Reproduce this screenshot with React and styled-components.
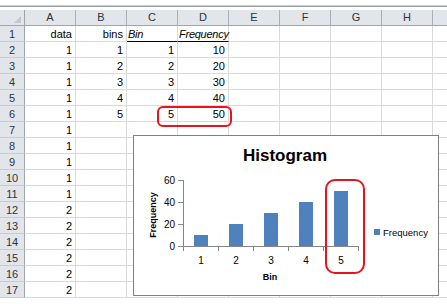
import React from 'react'
import styled, { createGlobalStyle } from 'styled-components'

const GlobalStyle = createGlobalStyle`
  body {
    margin: 0;
    background: #fff;
    font-family: "Liberation Sans", Arial, sans-serif;
    overflow: hidden;
  }
`

const COLS = ['A', 'B', 'C', 'D', 'E', 'F', 'G', 'H', '']

const rows = [
  ['data', 'bins', 'Bin', 'Frequency'],
  [1, 1, 1, 10],
  [1, 2, 2, 20],
  [1, 3, 3, 30],
  [1, 4, 4, 40],
  [1, 5, 5, 50],
  [1], [1], [1], [1], [1],
  [2], [2], [2], [2], [2], [2],
]

const Sheet = styled.div`
  position: relative;
  width: 447px;
  height: 304px;
  overflow: hidden;
`

const TopStrip = styled.div`
  height: 10px;
  box-sizing: border-box;
  padding-top: 5px;

  div {
    height: 1px;
    background: #c9cdd2;
  }
  div + div {
    background: #9da2a8;
  }
`

const Grid = styled.div`
  display: grid;
  grid-template-columns: 25px repeat(9, 51px);
  grid-auto-rows: 16px;
  font-size: 11px;
  color: #000;
`

const Corner = styled.div`
  position: relative;
  background: #e2e6eb;
  border-right: 1px solid #9ea5ad;
  border-bottom: 1px solid #9ea5ad;
  box-sizing: border-box;

  &::after {
    content: '';
    position: absolute;
    right: 3px;
    bottom: 2px;
    border-left: 7px solid transparent;
    border-bottom: 7px solid #c3c8ce;
  }
`

const ColHead = styled.div`
  background: #e2e6eb;
  border-right: 1px solid #a9b0b8;
  border-bottom: 1px solid #9ea5ad;
  box-sizing: border-box;
  text-align: center;
  line-height: 15px;
  color: #2c3440;
`

const RowHead = styled.div`
  background: #e2e6eb;
  border-right: 1px solid #9ea5ad;
  border-bottom: 1px solid #c5ccd4;
  box-sizing: border-box;
  text-align: center;
  line-height: 16px;
  color: #2c3440;
`

const Cell = styled.div`
  border-right: 1px solid #dadada;
  border-bottom: 1px solid ${p => (p.$rule ? '#000' : '#dadada')};
  box-sizing: border-box;
  padding: ${p => (p.$left ? '0 0 0 1px' : '0 3px')};
  line-height: 16px;
  text-align: ${p => (p.$left ? 'left' : 'right')};
  font-style: ${p => (p.$italic ? 'italic' : 'normal')};
  letter-spacing: ${p => (p.$left ? '-0.25px' : '0')};
  white-space: nowrap;
`

const Mark = styled.div`
  position: absolute;
  border: 2px solid #e3161f;
  border-radius: ${p => p.$r}px;
  box-sizing: border-box;
`

const ChartBox = styled.div`
  position: absolute;
  left: 133px;
  top: 135px;
  width: 306px;
  height: 161px;
  background: #fff;
  border: 1px solid #808080;
  box-sizing: border-box;
`

const ChartSvg = styled.svg`
  display: block;
  font-family: "Liberation Sans", Arial, sans-serif;
`

const values = [10, 20, 30, 40, 50]

const Chart = () => {
  const x0 = 49
  const y0 = 110
  const unit = 1.1
  const cw = 35
  return (
    <ChartBox>
      <ChartSvg width="304" height="159" viewBox="0 0 304 159">
        <text x="151" y="25" textAnchor="middle" fontSize="17" fontWeight="bold" fill="#000">Histogram</text>

        <text transform={`translate(22 ${79}) rotate(-90)`} textAnchor="middle" fontSize="9" fontWeight="bold" fill="#000">Frequency</text>

        <line x1={x0 + 0.5} y1={y0 - 66} x2={x0 + 0.5} y2={y0 + 0.5} stroke="#868686" />
        {[0, 20, 40, 60].map(v => {
          const y = Math.round(y0 - v * unit) + 0.5
          return (
            <g key={v}>
              <line x1={x0 - 5} y1={y} x2={x0} y2={y} stroke="#868686" />
              <text x={x0 - 8} y={y + 3.5} textAnchor="end" fontSize="10" fill="#000">{v}</text>
            </g>
          )
        })}

        {values.map((v, i) => {
          const h = Math.round(v * unit)
          return (
            <rect key={i} x={x0 + i * cw + 11} y={y0 - h} width="14" height={h} fill="#4f81bd" />
          )
        })}

        <line x1={x0} y1={y0 + 0.5} x2={x0 + cw * 5 + 1} y2={y0 + 0.5} stroke="#868686" />
        {[0, 1, 2, 3, 4, 5].map(i => (
          <line key={i} x1={x0 + i * cw + 0.5} y1={y0} x2={x0 + i * cw + 0.5} y2={y0 + 5} stroke="#868686" />
        ))}
        {values.map((v, i) => (
          <text key={i} x={x0 + i * cw + 18} y={y0 + 18} textAnchor="middle" fontSize="10" fill="#000">{i + 1}</text>
        ))}

        <text x="136" y="144" textAnchor="middle" fontSize="9" fontWeight="bold" fill="#000">Bin</text>

        <rect x="240" y="93" width="6" height="6" fill="#4f81bd" />
        <text x="249" y="99.5" fontSize="9.5" fill="#000">Frequency</text>
      </ChartSvg>
    </ChartBox>
  )
}

const App = () => {
  return (
    <Sheet>
      <GlobalStyle />
      <TopStrip>
        <div />
        <div />
      </TopStrip>
      <Grid>
        <Corner />
        {COLS.map((c, i) => (
          <ColHead key={i}>{c}</ColHead>
        ))}
        {rows.map((r, ri) => (
          <React.Fragment key={ri}>
            <RowHead>{ri + 1}</RowHead>
            {COLS.map((c, ci) => {
              const head = ri === 0 && (ci === 2 || ci === 3)
              return (
                <Cell key={ci} $left={head} $italic={head} $rule={head}>
                  {r[ci] !== undefined ? r[ci] : ''}
                </Cell>
              )
            })}
          </React.Fragment>
        ))}
      </Grid>

      <Chart />

      <Mark $r={6} style={{ left: 157, top: 106, width: 75, height: 21 }} />
      <Mark $r={10} style={{ left: 325, top: 179, width: 40, height: 95 }} />
    </Sheet>
  )
}

export default App
